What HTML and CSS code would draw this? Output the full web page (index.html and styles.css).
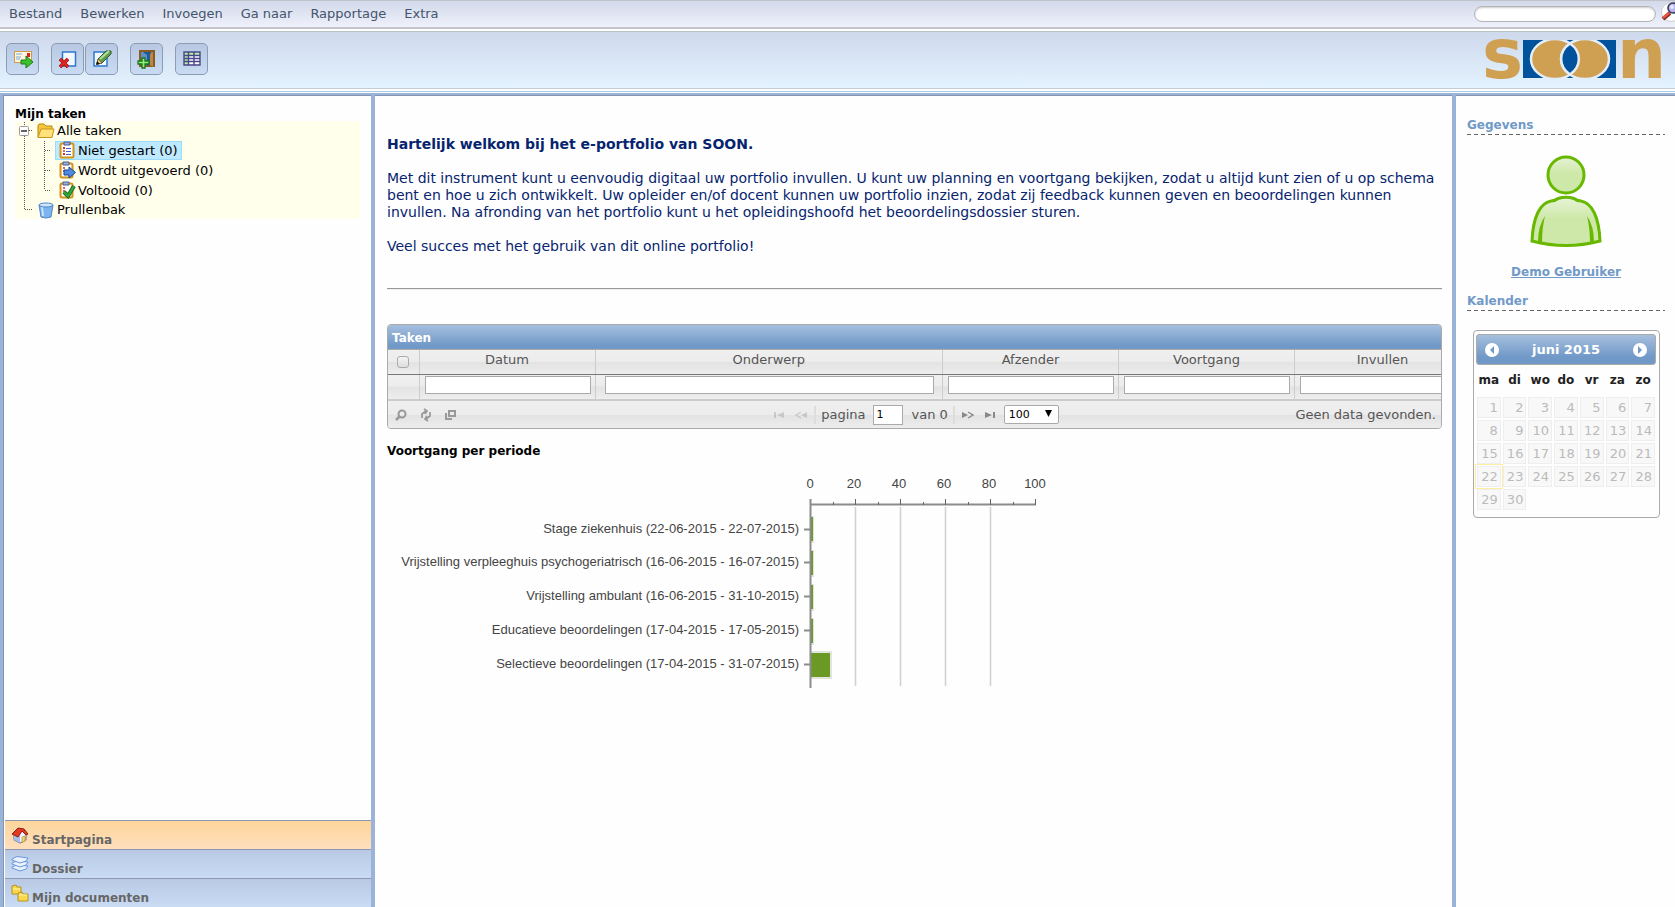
FILE: index.html
```html
<!DOCTYPE html>
<html lang="nl">
<head>
<meta charset="utf-8">
<title>SOON e-portfolio</title>
<link rel="stylesheet" href="styles.css">
</head>
<body>
<header>
  <div class="menubar">
    <nav class="menu">
      <a href="#">Bestand</a><a href="#">Bewerken</a><a href="#">Invoegen</a><a href="#">Ga naar</a><a href="#">Rapportage</a><a href="#">Extra</a>
    </nav>
    <form class="search">
      <input type="search" aria-label="Zoeken">
      <button type="button" aria-label="Zoek">
        <svg width="20" height="20" viewBox="0 0 20 20"><circle cx="10" cy="10" r="9.5" fill="#fff" stroke="#ccc"/><path d="M2 17l7-6" stroke="#7a2a2a" stroke-width="4"/><path d="M2 16l6-5" stroke="#f0553c" stroke-width="2.4"/><circle cx="12" cy="6" r="5" fill="#b9b6ee" stroke="#3d3a5c" stroke-width="1.6"/><circle cx="11" cy="5" r="2" fill="#e8e8ff"/></svg>
      </button>
    </form>
  </div>
  <div class="toolbar">
    <div class="tools">
      <button class="tool" type="button" aria-label="Verzenden">
        <svg width="20" height="20" viewBox="0 0 20 20"><rect x="1.5" y="2.5" width="17" height="11" fill="#fff6e0" stroke="#d29a4a"/><path d="M3 5h6M3 8h5M3 10h4" stroke="#7aa6d8"/><rect x="14" y="4" width="3" height="4" fill="#e02020"/><path d="M8 11h5V7l7 6-7 6v-4H8z" fill="#3fc12c" stroke="#1d7a1c"/></svg>
      </button>
      <div class="tool-pair">
        <button class="tool" type="button" aria-label="Verwijderen">
          <svg width="20" height="20" viewBox="0 0 20 20"><rect x="4.5" y="3" width="13" height="14" fill="#f2f7ff" stroke="#2f78d0" stroke-width="1.5"/><path d="M2 10l8 8M10 10l-8 8" stroke="#8f1212" stroke-width="3.6"/><path d="M2 10l8 8M10 10l-8 8" stroke="#e52620" stroke-width="2.2"/></svg>
        </button>
        <button class="tool" type="button" aria-label="Bewerken">
          <svg width="20" height="20" viewBox="0 0 20 20"><rect x="2" y="3" width="13" height="14" fill="#f2f7ff" stroke="#2f78d0" stroke-width="1.5"/><path d="M5 15l1-5 8-8h5v3l-9 9z" fill="#5f9d4e" stroke="#2b5c28"/><path d="M8 10l9-8" stroke="#b5dc9c" stroke-width="2"/><path d="M5 15l1-5 4 4z" fill="#f5cf86" stroke="#6b4a1a" stroke-width=".6"/><path d="M4 16l1-4 3 3z" fill="#111"/></svg>
        </button>
      </div>
      <button class="tool" type="button" aria-label="Toevoegen">
        <svg width="20" height="20" viewBox="0 0 20 20"><path d="M3 17V2h14v15z" fill="#5a91cf" stroke="#8a5a1e" stroke-width="2"/><path d="M6 3h8v12l-4 2V6z" fill="#23598f"/><path d="M13 5l3-2v15l-3-2z" fill="#b98a45"/><path d="M5 9h3v3h4v3H8v4H5v-4H1v-3h4z" fill="#8fef76" stroke="#19741c" stroke-width="1.3"/></svg>
      </button>
      <button class="tool" type="button" aria-label="Overzicht">
        <svg width="20" height="20" viewBox="0 0 20 20"><rect x="2" y="3" width="16" height="13" fill="#fff"/><path d="M2 3h16v3H2zM2 6h4v10H2z" fill="#b8efa0"/><path d="M2 3h16v13H2zM2 6.5h16M2 9.5h16M2 12.5h16M6.5 3v13M12 3v13" fill="none" stroke="#49458a" stroke-width="1.4"/></svg>
      </button>
    </div>
    <svg class="logo" width="184" height="48" viewBox="0 0 184 48" role="img" aria-label="soon">
      <defs><clipPath id="box"><rect x="39" y="5" width="93" height="38"/></clipPath></defs>
      <text class="logo-letter" x="-2" y="43">s</text>
      <g clip-path="url(#box)">
        <rect x="39" y="5" width="93" height="38" fill="#00529c"/>
        <ellipse cx="71" cy="24" rx="24" ry="20" fill="#cf9f52" stroke="#e4eefa" stroke-width="2.5"/>
        <ellipse cx="101" cy="24" rx="24" ry="20" fill="#cf9f52" stroke="#e4eefa" stroke-width="2.5"/>
        <path d="M86 8.5a24 20 0 0 1 0 31a24 20 0 0 1 0-31z" fill="#00529c" stroke="#e4eefa" stroke-width="2.5"/>
      </g>
      <text class="logo-letter" x="133" y="43">n</text>
    </svg>
  </div>
</header>

<div class="workspace">
  <aside class="sidebar">
    <section class="tasks">
      <h2 class="tasks-title">Mijn taken</h2>
      <div class="tree">
        <div class="node root">
          <svg class="branch" width="20" height="19" viewBox="0 0 20 19"><path d="M9.5 1v18M10 9.5h7" stroke="#555" stroke-dasharray="1 1"/><rect x="4.5" y="5.5" width="9" height="9" rx="1" fill="#fff" stroke="#999"/><path d="M6 10h6" stroke="#222" stroke-width="1.4"/></svg>
          <svg width="18" height="18" viewBox="0 0 18 18"><path d="M1 15V4l1-2h5l2 2h6v11z" fill="#f4c63a" stroke="#b98516"/><path d="M1 15.5L4 7h13l-2 8.5z" fill="#ffe27a" stroke="#c9951e"/></svg>
          <span>Alle taken</span>
        </div>
        <div class="node sub">
          <svg class="branch" width="36" height="20" viewBox="0 0 36 20"><path d="M9.5 0v20M29.5 1v19M30 10.5h7" stroke="#555" stroke-dasharray="1 1"/></svg>
          <span class="selected"><svg width="18" height="18" viewBox="0 0 18 18"><rect x="2.5" y="2.5" width="13" height="14" rx="1.5" fill="#fff" stroke="#d2941b" stroke-width="2"/><path d="M6 1h6v3H6z" fill="#9ab0e0" stroke="#4a5a8a"/><path d="M5 7h2M5 13h2" stroke="#e03020" stroke-width="2"/><path d="M5 10h2" stroke="#e03020" stroke-width="1.5"/><path d="M8 7.5h5M8 10.5h5M8 13.5h5" stroke="#4560c0"/></svg>Niet gestart (0)</span>
        </div>
        <div class="node sub">
          <svg class="branch" width="36" height="20" viewBox="0 0 36 20"><path d="M9.5 0v20M29.5 0v20M30 10.5h7" stroke="#555" stroke-dasharray="1 1"/></svg>
          <span class="leaf"><svg width="18" height="18" viewBox="0 0 18 18"><rect x="2.5" y="2.5" width="12" height="14" rx="1.5" fill="#fff" stroke="#d2941b" stroke-width="2"/><path d="M5 1h6v3H5z" fill="#9ab0e0" stroke="#4a5a8a"/><path d="M5 7h2M5 10h2" stroke="#e03020" stroke-width="1.5"/><path d="M6 9h5V6l6.5 5.5L11 17v-3H6z" fill="#4f8ae0" stroke="#1f458f"/></svg>Wordt uitgevoerd (0)</span>
        </div>
        <div class="node sub">
          <svg class="branch" width="36" height="20" viewBox="0 0 36 20"><path d="M9.5 0v20M29.5 0v10M30 10.5h7" stroke="#555" stroke-dasharray="1 1"/></svg>
          <span class="leaf"><svg width="18" height="18" viewBox="0 0 18 18"><rect x="2.5" y="2.5" width="12" height="14" rx="1.5" fill="#fff" stroke="#d2941b" stroke-width="2"/><path d="M5 1h6v3H5z" fill="#9ab0e0" stroke="#4a5a8a"/><path d="M5 7h2M5 10h2" stroke="#e03020" stroke-width="1.5"/><path d="M6 11l4 4 6-10" fill="none" stroke="#14641a" stroke-width="4"/><path d="M6 11l4 4 6-10" fill="none" stroke="#36a83a" stroke-width="2.4"/></svg>Voltooid (0)</span>
        </div>
        <div class="node root">
          <svg class="branch" width="20" height="19" viewBox="0 0 20 19"><path d="M9.5 0v9M10 9.5h8" stroke="#555" stroke-dasharray="1 1"/></svg>
          <svg width="18" height="18" viewBox="0 0 18 18"><path d="M2 4l2 12q5 2 10 0l2-12z" fill="#7db4ee" stroke="#4d86c8"/><path d="M5 6l1 9" stroke="#c8e2fb" stroke-width="2"/><ellipse cx="9" cy="4" rx="7" ry="2" fill="#cfe4fa" stroke="#4d86c8"/></svg>
          <span>Prullenbak</span>
        </div>
      </div>
    </section>
    <nav class="sections">
      <a class="section active" href="#"><svg width="18" height="18" viewBox="0 0 18 18"><path d="M3 8v6l6 3 6-3V8L11 4z" fill="#f0f4ff" stroke="#5a6a9a"/><path d="M3 8v6l6 3V9z" fill="#a9bde8"/><path d="M11 11l3-1v5l-3 1.5z" fill="#f2d465" stroke="#b28a28" stroke-width=".6"/><path d="M1 8l6-6 6 1 4 5-2 1-4-4-4 6z" fill="#e23a22" stroke="#941c12"/></svg><span>Startpagina</span></a>
      <a class="section" href="#"><svg width="18" height="18" viewBox="0 0 18 18"><g fill="#eaf2ff" stroke="#6b97e0"><path d="M1 12l5-2 11 1-2 3-6 2-8-3z"/><path d="M1 8l5-2 11 1-2 3-6 2-8-3z"/><path d="M1 4l5-2.5 11 1.5-2 3-6 2-8-3z"/></g></svg><span>Dossier</span></a>
      <a class="section" href="#"><svg width="18" height="18" viewBox="0 0 18 18"><g fill="#f9d94c" stroke="#b8921c"><path d="M1 10V2l4-1 1 2h4v7z"/><path d="M7 17V9l4-1 1 2h5v7z"/></g><path d="M8 11h8M2 5h7" stroke="#fff2a8"/></svg><span>Mijn documenten</span></a>
    </nav>
  </aside>

  <main class="content">
    <section class="intro">
      <h1>Hartelijk welkom bij het e-portfolio van SOON.</h1>
      <p>Met dit instrument kunt u eenvoudig digitaal uw portfolio invullen. U kunt uw planning en voortgang bekijken, zodat u altijd kunt zien of u op schema bent en hoe u zich ontwikkelt. Uw opleider en/of docent kunnen uw portfolio inzien, zodat zij feedback kunnen geven en beoordelingen kunnen invullen. Na afronding van het portfolio kunt u het opleidingshoofd het beoordelingsdossier sturen.</p>
      <p>Veel succes met het gebruik van dit online portfolio!</p>
    </section>
    <hr>
    <section class="grid">
      <h2 class="grid-title">Taken</h2>
      <div class="grid-view">
        <table class="grid-table">
          <colgroup><col class="c-check"><col class="c-std"><col><col class="c-std"><col class="c-std"><col class="c-std"></colgroup>
          <thead>
            <tr class="heads"><th><input class="check" type="checkbox" aria-label="Alles selecteren"></th><th>Datum</th><th>Onderwerp</th><th>Afzender</th><th>Voortgang</th><th>Invullen</th></tr>
            <tr class="filters"><td></td><td><input type="text" aria-label="Datum"></td><td class="wide"><input type="text" aria-label="Onderwerp"></td><td><input type="text" aria-label="Afzender"></td><td><input type="text" aria-label="Voortgang"></td><td><input type="text" aria-label="Invullen"></td></tr>
          </thead>
        </table>
      </div>
      <div class="pager">
        <div class="pager-tools">
          <button type="button" aria-label="Zoeken"><svg width="14" height="14" viewBox="0 0 14 14"><circle cx="8" cy="6" r="3.5" fill="none" stroke="#999" stroke-width="2"/><path d="M6 8l-4 4" stroke="#999" stroke-width="2.5"/></svg></button>
          <button type="button" aria-label="Vernieuwen"><svg width="14" height="14" viewBox="0 0 14 14" fill="none" stroke="#999" stroke-width="1.7"><path d="M3 10V6l4-3M5 1l3 2-2 3M11 4v4l-4 3M9 13l-3-2 2-3"/></svg></button>
          <button type="button" aria-label="Kolommen"><svg width="14" height="14" viewBox="0 0 14 14" fill="none" stroke="#999" stroke-width="2"><rect x="5" y="3" width="6" height="5"/><path d="M2 5v6h6"/></svg></button>
        </div>
        <div class="pager-nav">
          <button class="off" type="button" aria-label="Eerste"><svg width="12" height="8" viewBox="0 0 12 8" fill="#999"><path d="M1 1h2v6H1zM11 1v6L4 4z"/></svg></button>
          <button class="off" type="button" aria-label="Vorige"><svg width="12" height="8" viewBox="0 0 12 8" fill="#999"><path d="M12 1v6L6 4z"/><path d="M6 1L1 4l5 3" fill="none" stroke="#999" stroke-width="1.3"/></svg></button>
          <span class="sep"></span>
          <label class="page">pagina <input type="text" value="1"></label>
          <span class="total">van 0</span>
          <span class="sep"></span>
          <button type="button" aria-label="Volgende"><svg width="12" height="8" viewBox="0 0 12 8" fill="#888"><path d="M0 1v6l6-3z"/><path d="M6 1l5 3-5 3" fill="none" stroke="#888" stroke-width="1.3"/></svg></button>
          <button type="button" aria-label="Laatste"><svg width="12" height="8" viewBox="0 0 12 8" fill="#888"><path d="M1 1v6l7-3zM9 1h2v6H9z"/></svg></button>
          <span class="rows"><select aria-label="Rijen per pagina"><option>100</option></select><svg width="7" height="7" viewBox="0 0 7 7"><path d="M0 0h7L3.5 7z"/></svg></span>
        </div>
        <div class="pager-info">Geen data gevonden.</div>
      </div>
    </section>
    <section class="progress">
      <h2>Voortgang per periode</h2>
      <svg class="chart" width="660" height="230" viewBox="0 0 660 230" role="img" aria-label="Voortgang per periode">
        <g class="gridlines"><path d="M468.5 47v179M513.5 47v179M558.5 47v179M603.5 47v179"/></g>
        <g class="shadow"><rect x="424" y="56" width="3" height="27"/><rect x="424" y="90" width="3" height="27"/><rect x="424" y="124" width="3" height="27"/><rect x="424" y="158" width="3" height="27"/><rect x="424" y="191" width="21" height="28"/></g>
        <g class="bars"><rect x="424" y="57" width="2" height="24"/><rect x="424" y="91" width="2" height="24"/><rect x="424" y="125" width="2" height="24"/><rect x="424" y="159" width="2" height="24"/><rect x="424" y="193" width="19" height="24"/></g>
        <path class="axis" d="M423.5 39v189M417 69.5h7M417 102.5h7M417 136.5h7M417 170.5h7M417 204.5h7M423 44.5h226"/>
        <path class="ticks" d="M468.5 39v6M513.5 39v6M558.5 39v6M603.5 39v6M648.5 39v6M446.5 42v3M491.5 42v3M536.5 42v3M581.5 42v3M626.5 42v3"/>
        <g class="values"><text x="423" y="28">0</text><text x="467" y="28">20</text><text x="512" y="28">40</text><text x="557" y="28">60</text><text x="602" y="28">80</text><text x="648" y="28">100</text></g>
        <g class="names"><text x="412" y="73">Stage ziekenhuis (22-06-2015 - 22-07-2015)</text><text x="412" y="106">Vrijstelling verpleeghuis psychogeriatrisch (16-06-2015 - 16-07-2015)</text><text x="412" y="140">Vrijstelling ambulant (16-06-2015 - 31-10-2015)</text><text x="412" y="174">Educatieve beoordelingen (17-04-2015 - 17-05-2015)</text><text x="412" y="208">Selectieve beoordelingen (17-04-2015 - 31-07-2015)</text></g>
      </svg>
    </section>
  </main>

  <aside class="panel">
    <h2 class="panel-title">Gegevens</h2>
    <div class="profile">
      <svg width="74" height="94" viewBox="0 0 74 94">
        <defs><linearGradient id="skin" x1="0" y1="0" x2="0" y2="1"><stop offset="0" stop-color="#e8f3d8"/><stop offset=".45" stop-color="#cde8a8"/></linearGradient></defs>
        <circle cx="37" cy="21" r="18" fill="url(#skin)" stroke="#68b800" stroke-width="3"/>
        <path d="M3 87C4 63 11 49 22 47Q26 47 29 44.5Q37 42 45 44.5Q48 47 52 47C63 49 70 63 71 87Q37 96 3 87z" fill="url(#skin)" stroke="#68b800" stroke-width="3"/>
        <path d="M9 88Q9 72 16 62Q13 74 13 89zM65 88Q65 72 58 62Q61 74 61 89z" fill="#68b800"/>
      </svg>
      <a href="#">Demo Gebruiker</a>
    </div>
    <h2 class="panel-title">Kalender</h2>
    <div class="calendar">
      <div class="cal-head">
        <button type="button" aria-label="Vorige maand"><svg width="14" height="14" viewBox="0 0 14 14"><circle cx="7" cy="7" r="7" fill="#fff"/><path d="M9 3v8L5 7z" fill="#6f9ac8"/></svg></button>
        <span>juni 2015</span>
        <button type="button" aria-label="Volgende maand"><svg width="14" height="14" viewBox="0 0 14 14"><circle cx="7" cy="7" r="7" fill="#fff"/><path d="M5 3v8l4-4z" fill="#6f9ac8"/></svg></button>
      </div>
      <table>
        <thead><tr><th>ma</th><th>di</th><th>wo</th><th>do</th><th>vr</th><th>za</th><th>zo</th></tr></thead>
        <tbody>
          <tr><td><span>1</span></td><td><span>2</span></td><td><span>3</span></td><td><span>4</span></td><td><span>5</span></td><td><span>6</span></td><td><span>7</span></td></tr>
          <tr><td><span>8</span></td><td><span>9</span></td><td><span>10</span></td><td><span>11</span></td><td><span>12</span></td><td><span>13</span></td><td><span>14</span></td></tr>
          <tr><td><span>15</span></td><td><span>16</span></td><td><span>17</span></td><td><span>18</span></td><td><span>19</span></td><td><span>20</span></td><td><span>21</span></td></tr>
          <tr><td class="today"><span>22</span></td><td><span>23</span></td><td><span>24</span></td><td><span>25</span></td><td><span>26</span></td><td><span>27</span></td><td><span>28</span></td></tr>
          <tr><td><span>29</span></td><td><span>30</span></td><td></td><td></td><td></td><td></td><td></td></tr>
        </tbody>
      </table>
    </div>
  </aside>
</div>
</body>
</html>
```

FILE: styles.css
```css
* { box-sizing: border-box; }
body {
  margin: 0;
  height: 100vh;
  display: flex;
  flex-direction: column;
  overflow: hidden;
  background: #fefefe;
  font: 13px/17px Verdana, "DejaVu Sans", sans-serif;
  color: #000;
}
h1, h2, p { margin: 0; }
h2 { font-size: 12px; line-height: 16px; }
button { padding: 0; border: 0; background: none; display: flex; align-items: center; justify-content: center; }
svg { display: block; flex: none; }

.menubar {
  display: flex;
  justify-content: space-between;
  height: 29px;
  border-top: 1px solid #c0c4c8;
  border-bottom: 2px solid #c4c4cc;
  background: linear-gradient(#d2d9ea, #eff1fb);
  overflow: hidden;
}
.menu { display: flex; align-items: center; gap: 18px; padding: 0 0 2px 9px; }
.menu a { color: #44546c; text-decoration: none; }
.search { display: flex; gap: 5px; align-items: center; margin-right: -6px; }
.search button { margin-bottom: 5px; }
.search input {
  width: 182px;
  height: 16px;
  padding: 0 8px;
  border: 1px solid #b4b4b8;
  border-radius: 8px;
  background: #fff;
  box-shadow: inset 0 1px 2px #ccc;
  appearance: none;
}
.toolbar {
  display: flex;
  align-items: center;
  justify-content: space-between;
  height: 58px;
  margin-top: 2px;
  padding: 0 7px 3px 6px;
  border-top: 1px solid #b8c2c6;
  border-bottom: 1px solid #c6cccf;
  background: linear-gradient(#ced9ec, #e4f3ff);
}
.tools { display: flex; gap: 12px; }
.tool-pair { display: flex; gap: 1px; }
.tool {
  width: 33px;
  height: 32px;
  border: 1px solid #8e9bb4;
  border-radius: 5px;
  background: linear-gradient(#b8c8e2, #c9dbf3);
}
.logo { overflow: visible; }
.logo-letter { font: bold 69px "DejaVu Sans", sans-serif; fill: #cf9f52; }

.workspace {
  flex: 1;
  min-height: 0;
  display: grid;
  grid-template-columns: 368px 1fr 219px;
  column-gap: 4px;
  margin-top: 4px;
  padding-left: 3px;
  padding-top: 2px;
  background: #9bb3d8;
  box-shadow: 0 -1px #fff, 0 -2px #a9cbe0;
}
.sidebar, .content, .panel { background: #fefefe; border-top: 1px solid #8495b0; min-width: 0; min-height: 0; }
.sidebar { display: flex; flex-direction: column; justify-content: space-between; border-left: 1px solid #8495b0; }
.tasks { padding: 12px 11px 0; }
.tasks-title { line-height: 13px; }
.tree { background: #ffffec; }
.node { display: flex; align-items: center; height: 20px; white-space: nowrap; }
.root { height: 19px; gap: 2px; }
.selected, .leaf { display: flex; align-items: center; gap: 2px; height: 19px; margin-left: 4px; padding: 0 3px 0 2px; border: 1px solid transparent; }
.selected { background: #bee9ff; border-color: #99dcff; }

.sections { margin-left: 1px; }
.section {
  display: flex;
  align-items: flex-start;
  gap: 3px;
  height: 29px;
  padding: 5px 0 0 6px;
  border-top: 1px solid #8d99b4;
  background: linear-gradient(#b9c9e4, #c9dcf4);
  color: #666;
  font-size: 12px;
  font-weight: bold;
  line-height: 16px;
  text-decoration: none;
}
.section span { padding-top: 6px; }
.active { background: linear-gradient(#fdd59b, #ffdfbd); }

.content { padding: 40px 10px 0 12px; overflow: hidden; }
.intro { display: grid; gap: 17px; color: #06246f; font-size: 14px; }
.intro h1 { font-size: 14px; line-height: 17px; }
hr { margin: 33px 0 34px; border: 0; border-top: 1px solid #999; border-bottom: 1px solid #eee; }

.grid { border: 1px solid #aaa; border-radius: 4px; overflow: hidden; color: #555; background: #ececec; }
.grid-title { height: 25px; padding: 5px 4px; border-bottom: 1px solid #aaa; background: linear-gradient(#a6bfde, #7199c8 85%); color: #fff; }
.grid-view { overflow: hidden; }
.grid-table { width: calc(100% + 30px); border-collapse: collapse; table-layout: fixed; }
.c-check { width: 31px; }
.c-std { width: 176px; }
.grid-table th, .grid-table td { padding: 0; height: 25px; border-right: 1px solid #ccc; background: linear-gradient(#efefef, #ececec 50%, #e2e2e2 50%, #ededed); }
.grid-table th { height: 24px; padding-bottom: 4px; border-bottom: 1px solid #777; font-weight: normal; line-height: 16px; }
.check { appearance: none; display: block; width: 12px; height: 12px; margin: 5px auto 0; border: 1px solid #aaa; border-radius: 3px; background: linear-gradient(#f4f4f4, #ddd); }
.filters td { padding: 0 4px 4px 5px; }
.filters .wide { padding: 0 8px 4px 9px; }
.filters input { display: block; width: 100%; height: 18px; border: 1px solid #aaa; background: #fff; }
.pager { display: grid; grid-template-columns: 1fr auto 1fr; align-items: center; height: 29px; border-top: 2px solid #ccc; background: linear-gradient(#efefef, #ececec 50%, #e2e2e2 50%, #ededed); }
.pager-tools { display: flex; gap: 11px; padding-left: 6px; }
.pager-nav { display: flex; align-items: center; height: 20px; gap: 5px; }
.pager-nav button { width: 17px; height: 18px; }
.off { opacity: .4; }
.sep { width: 2px; height: 18px; background: #ddd; }
.page { display: flex; align-items: center; gap: 8px; }
.total { padding-left: 3px; }
.page input { width: 30px; height: 20px; padding: 1px 2px; border: 1px solid #aaa; font: 11px "DejaVu Sans", sans-serif; background: #fff; }
.rows { position: relative; }
.rows select { display: block; appearance: none; width: 55px; height: 19px; padding: 0 4px; border: 1px solid #aaa; border-radius: 2px; background: #fff; color: #000; font: 11px "DejaVu Sans", sans-serif; }
.rows svg { position: absolute; right: 7px; top: 5px; pointer-events: none; }
.pager-info { padding-right: 5px; text-align: right; }

.progress { padding-top: 14px; }
.chart { display: block; margin-top: 1px; }
.chart text { font: 13px "Liberation Sans", Arial, sans-serif; fill: #444; }
.names text { text-anchor: end; }
.values text { text-anchor: middle; }
.gridlines path { fill: none; stroke: #d0d0d0; stroke-width: 1.5; }
.shadow rect { fill: #e2e4de; }
.bars rect { fill: #6b9a24; }
.axis { fill: none; stroke: #8c8c8c; stroke-width: 2; }
.ticks { fill: none; stroke: #666; }

.panel { padding: 21px 10px 0 11px; }
.panel-title { height: 18px; background: repeating-linear-gradient(90deg, #666 0 4px, transparent 4px 7px) left bottom / 100% 1px no-repeat; color: #7199c8; }
.profile { display: flex; flex-direction: column; align-items: center; gap: 16px; padding: 19px 0 13px; }
.profile a { color: #7199c8; font-size: 12px; font-weight: bold; line-height: 16px; }
.calendar { margin: 19px 5px 0 6px; padding: 3px 3px 6px 2px; border: 1px solid #aaa; border-radius: 4px; }
.cal-head { display: flex; align-items: center; justify-content: space-between; height: 31px; padding: 0 8px; border: 1px solid #aaa; border-radius: 3px; background: linear-gradient(#a6bfde, #7199c8 75%); color: #fff; font-weight: bold; }
.calendar table { width: 100%; border-collapse: collapse; table-layout: fixed; font-size: 12px; }
.calendar th { height: 31px; padding: 0; color: #222; }
.calendar td { height: 23px; padding: 1px; }
.calendar td span { display: block; height: 21px; padding: 0 2px; border: 1px solid #eee; background: #f8f8f8; color: #bbb; font-size: 13px; line-height: 19px; text-align: right; }
.calendar .today { outline: 1px solid #fcefa1; outline-offset: 0; }
```
